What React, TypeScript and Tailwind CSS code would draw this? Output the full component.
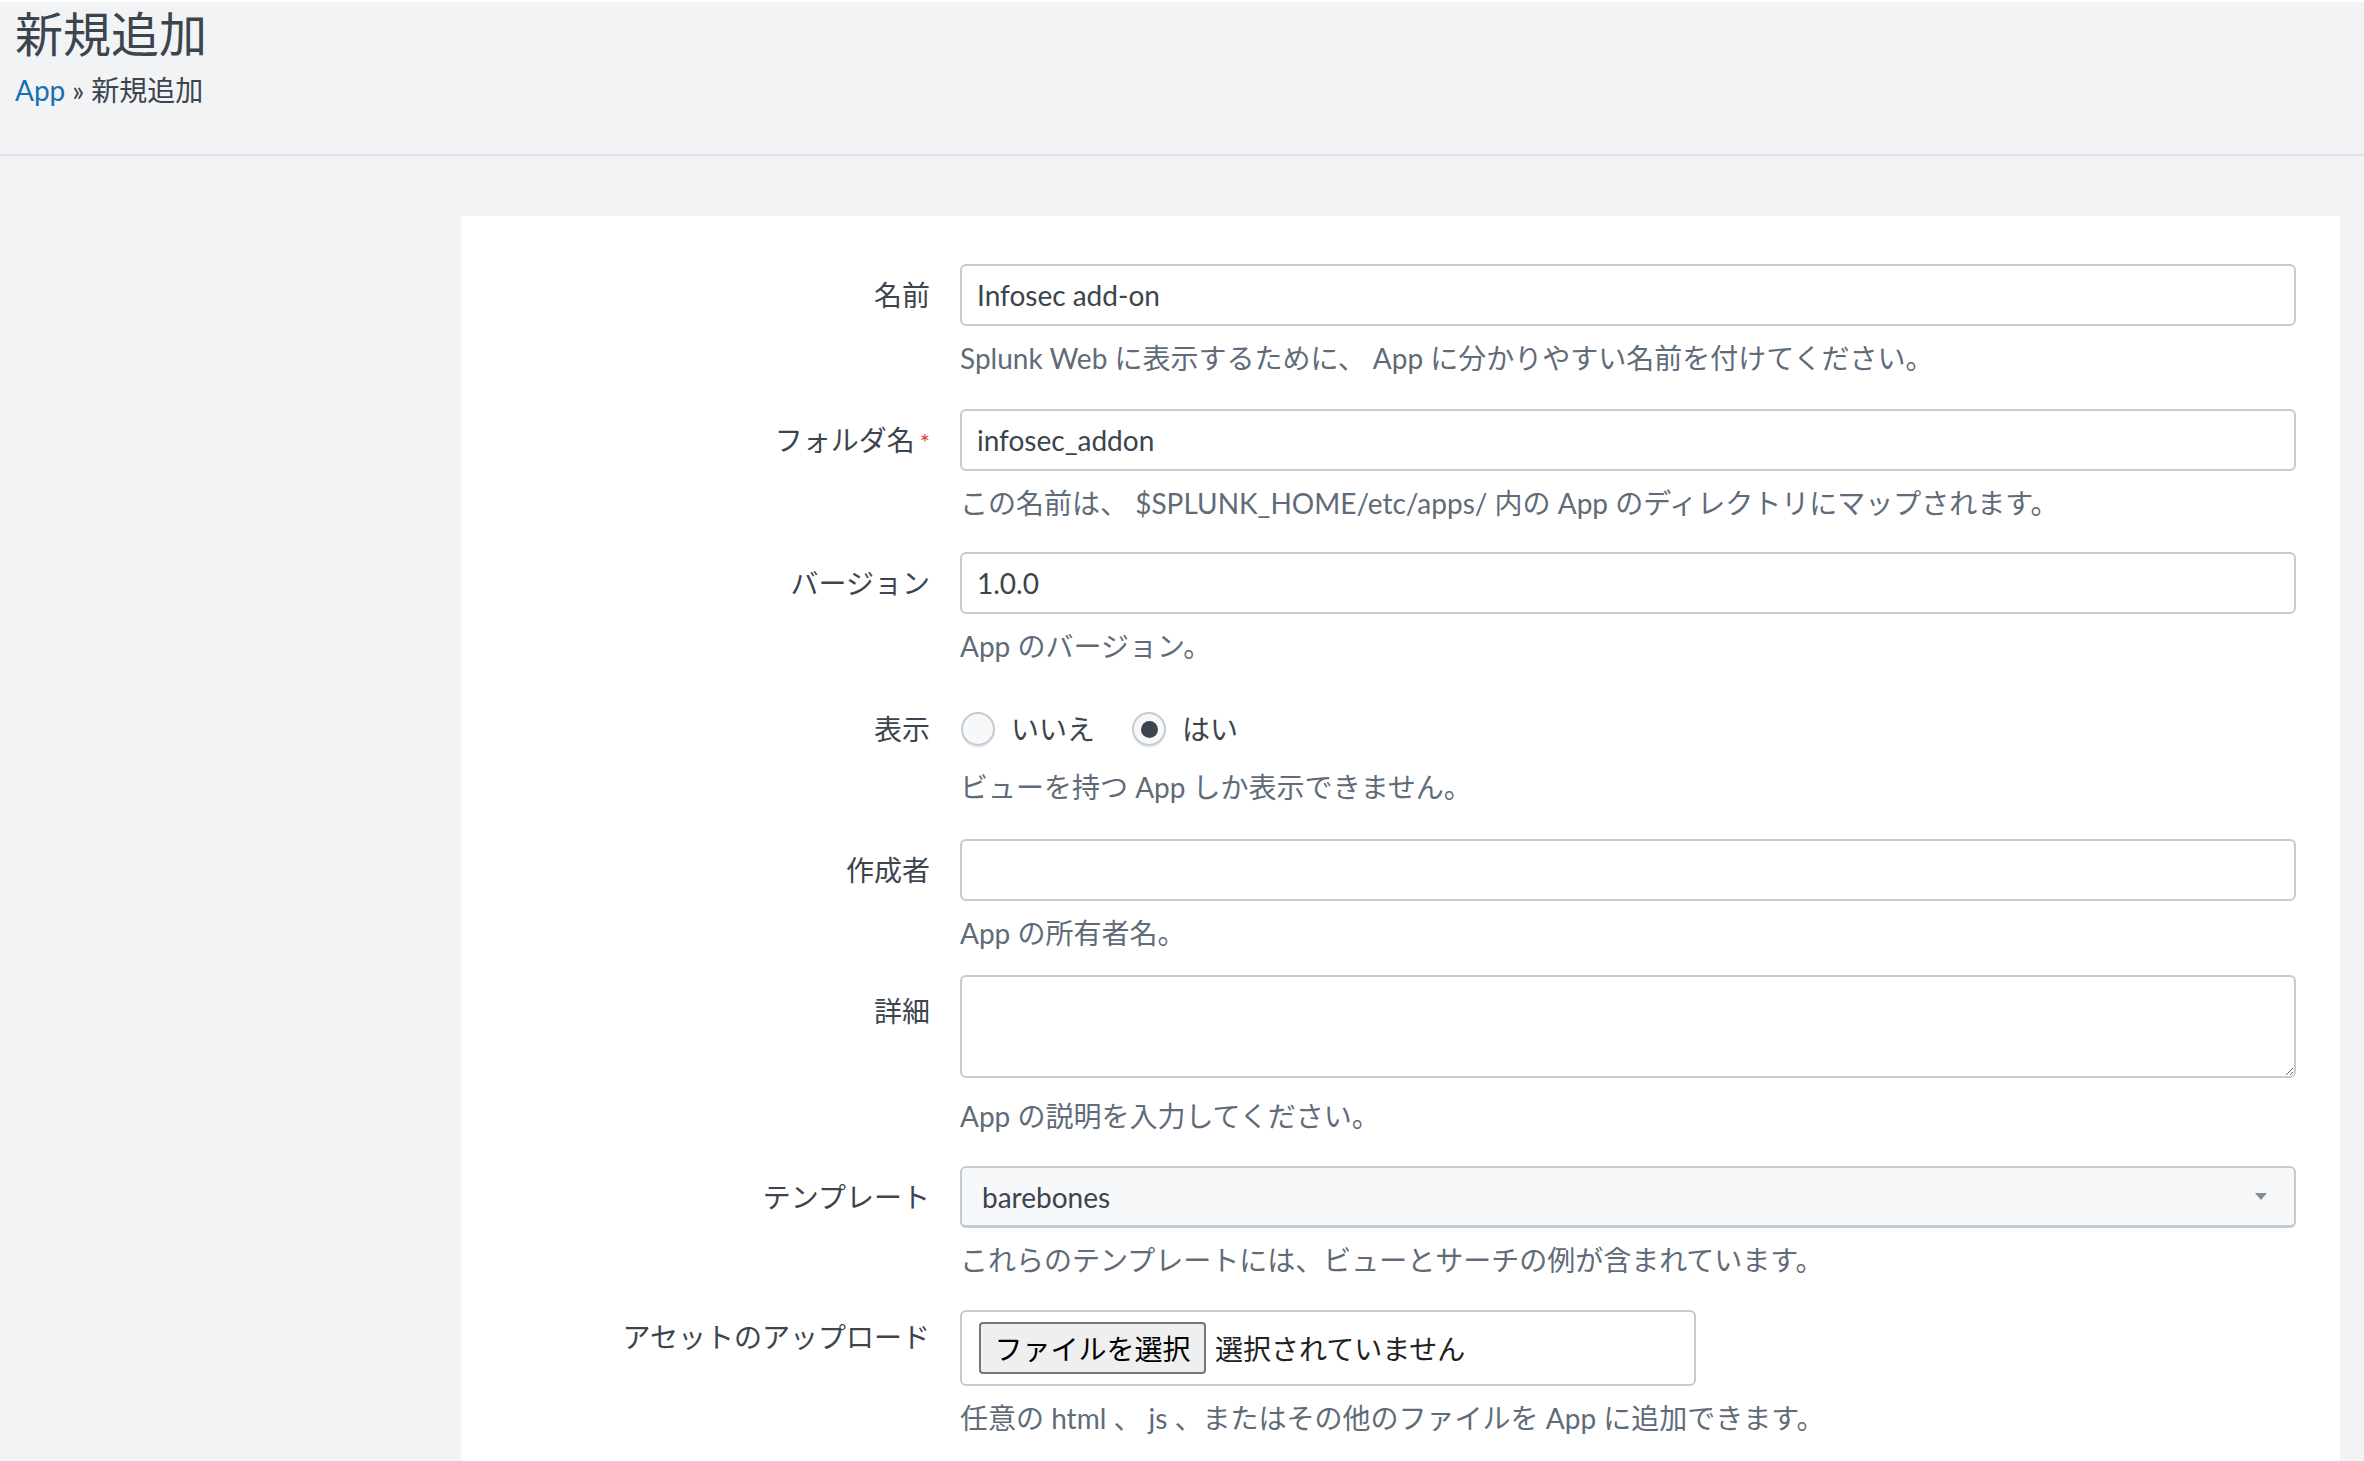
import type { ReactNode } from 'react';

const font = { fontFamily: 'Lato, "Noto Sans CJK JP", sans-serif' };

function Field({
  label,
  help,
  children,
  className = '',
  labelClass = 'leading-[62px]',
  helpClass = 'mt-[14px]',
  required = false,
}: {
  label: string;
  help: string;
  children: ReactNode;
  className?: string;
  labelClass?: string;
  helpClass?: string;
  required?: boolean;
}) {
  return (
    <div className={`flex ${className}`}>
      <label className={`w-[469px] shrink-0 text-right text-[28px] text-[#3c444d] ${labelClass}`}>
        {label}
        {required && <span className="ml-[5px] text-[24px] text-[#d9443a]">*</span>}
      </label>
      <div className="ml-[30px] w-[1336px] shrink-0">
        {children}
        <p className={`text-[28px] leading-[36px] text-[#5f6b78] ${helpClass}`}>{help}</p>
      </div>
    </div>
  );
}

function TextInput({ value }: { value: string }) {
  return (
    <input
      type="text"
      defaultValue={value}
      className="block h-[62px] w-full rounded-[6px] border-2 border-[#c3cbd4] bg-white px-[15px] text-[28px] text-[#3c444d] outline-none"
      style={font}
    />
  );
}

function Radio({ checked, label }: { checked?: boolean; label: string }) {
  return (
    <div className="flex items-center">
      <span className="flex h-[34px] w-[34px] items-center justify-center rounded-full border-2 border-[#c3cbd4] bg-[#f7f8fa] shadow-[0_2px_0_rgba(0,0,0,0.06)]">
        {checked && <span className="h-[17px] w-[17px] rounded-full bg-[#3c444d]" />}
      </span>
      <span className="ml-[16px] text-[28px] text-[#3c444d]">{label}</span>
    </div>
  );
}

export default function App() {
  return (
    <div className="flex h-[1461px] flex-col overflow-hidden border-t-2 border-white bg-[#f2f3f5]" style={font}>
      <header className="h-[154px] shrink-0 border-b-2 border-[#e1e3ea] px-[15px]">
        <h1 className="mt-[4px] text-[48px] leading-[56px] font-normal text-[#3c444d]">新規追加</h1>
        <div className="mt-[10px] text-[28px] leading-[36px] text-[#3c444d]">
          <a className="text-[#1a6fb0]">App</a>
          <span className="mx-[7px]">»</span>
          <span>新規追加</span>
        </div>
      </header>

      <main className="flex flex-1 pt-[60px] pl-[461px] pr-[24px]">
        <div className="flex-1 bg-white pt-[48px]">
          <Field label="名前" help="Splunk Web に表示するために、 App に分かりやすい名前を付けてください。">
            <TextInput value="Infosec add-on" />
          </Field>

          <Field
            className="mt-[33px]"
            label="フォルダ名"
            required
            help="この名前は、 $SPLUNK_HOME/etc/apps/ 内の App のディレクトリにマップされます。"
          >
            <TextInput value="infosec_addon" />
          </Field>

          <Field className="mt-[31px]" label="バージョン" help="App のバージョン。">
            <TextInput value="1.0.0" />
          </Field>

          <Field
            className="mt-[39px]"
            labelClass="leading-[52px]"
            label="表示"
            help="ビューを持つ App しか表示できません。"
          >
            <div className="flex h-[52px] items-center gap-[37px] pl-[1px]">
              <Radio label="いいえ" />
              <Radio checked label="はい" />
            </div>
          </Field>

          <Field className="mt-[34px]" label="作成者" help="App の所有者名。">
            <TextInput value="" />
          </Field>

          <Field
            className="mt-[24px]"
            labelClass="leading-[72px]"
            helpClass="mt-[20px]"
            label="詳細"
            help="App の説明を入力してください。"
          >
            <textarea
              className="block h-[103px] w-full rounded-[6px] border-2 border-[#c3cbd4] bg-white px-[15px] py-[10px] text-[28px] text-[#3c444d] outline-none"
              style={font}
            />
          </Field>

          <Field
            className="mt-[32px]"
            label="テンプレート"
            help="これらのテンプレートには、ビューとサーチの例が含まれています。"
          >
            <div className="flex h-[62px] w-full items-center justify-between rounded-[6px] border-2 border-b-[3px] border-[#c3cbd4] bg-[#f7f8fa] pl-[20px] pr-[27px] text-[28px] text-[#3c444d]">
              <span>barebones</span>
              <svg width="12" height="8" viewBox="0 0 12 8">
                <path d="M0 0h12L6 7z" fill="#818d99" />
              </svg>
            </div>
          </Field>

          <Field
            className="mt-[32px]"
            labelClass="leading-[54px]"
            label="アセットのアップロード"
            help="任意の html 、 js 、またはその他のファイルを App に追加できます。"
          >
            <div className="flex h-[76px] w-[736px] items-center rounded-[6px] border-2 border-[#c3cbd4] bg-white pl-[17px]">
              <button
                type="button"
                className="h-[52px] w-[227px] rounded-[4px] border-2 border-[#767676] bg-[#efefef] text-[28px] text-black"
                style={{ fontFamily: '"Noto Sans CJK JP", sans-serif' }}
              >
                ファイルを選択
              </button>
              <span
                className="ml-[9px] text-[28px] text-[#222222]"
                style={{ fontFamily: '"Noto Sans CJK JP", sans-serif' }}
              >
                選択されていません
              </span>
            </div>
          </Field>
        </div>
      </main>
    </div>
  );
}
